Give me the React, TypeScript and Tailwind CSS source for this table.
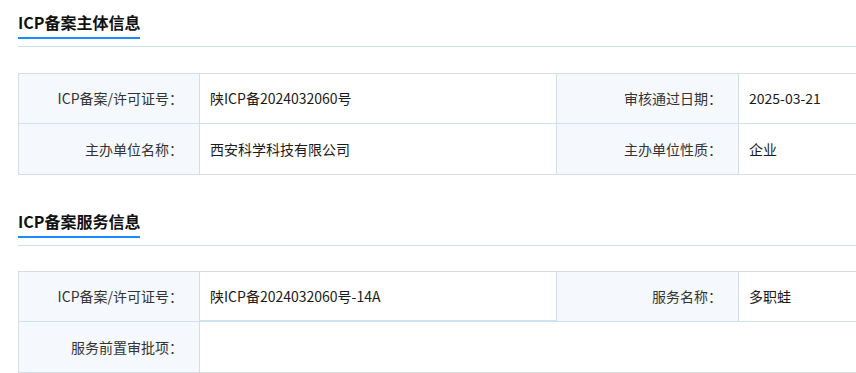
import React from "react";

const font = { fontFamily: '"Noto Sans CJK SC", "Noto Sans", sans-serif' };

function Title({ text }: { text: string }) {
  return (
    <div className="pl-[18px]">
      <div className="inline-block border-b-2 border-[#1a8cff] pb-[3px] text-[16px] leading-[24px] font-bold text-[#111]">
        {text}
      </div>
      <div className="mt-[7px] h-px bg-[#cadff0]" />
    </div>
  );
}

function Label({ children, last }: { children?: React.ReactNode; last?: boolean }) {
  return (
    <div
      className={
        "flex h-[50px] items-center justify-end bg-[#f5f9fd] pr-[16px] text-[14px] text-[#333] border-r border-[#d8dde4] " +
        (last ? "" : "border-b border-b-[#cfe1f1]")
      }
    >
      {children}
    </div>
  );
}

function Value({ children, last, className = "" }: { children?: React.ReactNode; last?: boolean; className?: string }) {
  return (
    <div
      className={
        "flex h-[50px] items-center pl-[10px] text-[14px] text-[#1a1a1a] border-r border-[#d8dde4] " +
        (last ? "" : "border-b border-b-[#cfe1f1] ") +
        className
      }
    >
      {children}
    </div>
  );
}

export default function App() {
  return (
    <div className="w-[856px] h-[373px] overflow-hidden bg-white" style={font}>
      <section className="pt-[10px]">
        <Title text="ICP备案主体信息" />
        <div className="ml-[18px] mt-[26px] w-[1100px] border-t border-b border-l border-[#d8dde4] grid grid-cols-[181px_357px_182px_380px]">
          <Label>ICP备案/许可证号：</Label>
          <Value>陕ICP备2024032060号</Value>
          <Label>审核通过日期：</Label>
          <Value>2025-03-21</Value>
          <Label last>主办单位名称：</Label>
          <Value last>西安科学科技有限公司</Value>
          <Label last>主办单位性质：</Label>
          <Value last>企业</Value>
        </div>
      </section>
      <section className="mt-[24px] pt-[10px]">
        <Title text="ICP备案服务信息" />
        <div className="ml-[18px] mt-[25px] w-[1100px] border-t border-b border-l border-[#d8dde4] grid grid-cols-[181px_357px_182px_380px]">
          <Label>ICP备案/许可证号：</Label>
          <Value className="border-b-2">陕ICP备2024032060号-14A</Value>
          <Label>服务名称：</Label>
          <Value>多职蛙</Value>
          <Label last>服务前置审批项：</Label>
          <div className="col-span-3 h-[50px]" />
        </div>
      </section>
    </div>
  );
}
